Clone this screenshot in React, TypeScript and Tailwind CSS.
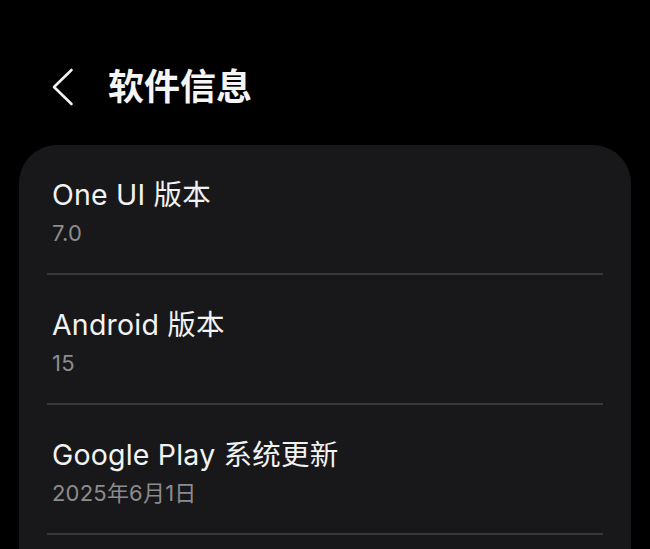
import React from 'react';

const rows = [
  { title: 'One UI 版本', value: '7.0' },
  { title: 'Android 版本', value: '15' },
  { title: 'Google Play 系统更新', value: '2025年6月1日' },
];

const font = { fontFamily: 'Inter, "Noto Sans CJK SC", sans-serif' };

export default function App() {
  return (
    <div className="h-[549px] w-[650px] overflow-hidden bg-black" style={font}>
      <header className="flex h-[145px] items-start pl-[50px] pt-[65px]">
        <div className="flex h-[44px] items-center gap-[32px]">
          <svg width="26" height="44" viewBox="0 0 26 44" fill="none">
            <path d="M21.5 5 L4 22 L21.5 39" stroke="#f2f2f2" strokeWidth="2.6" strokeLinecap="round" strokeLinejoin="round" />
          </svg>
          <h1 className="text-[36px] font-bold leading-[44px] text-[#f5f5f5]">软件信息</h1>
        </div>
      </header>

      <section className="mx-[19px] min-h-[420px] rounded-t-[38px] bg-[#18181a]">
        {rows.map((row) => (
          <div key={row.title} className="px-[28px]">
            <div className="px-[5px] pb-[20px] pt-[32px]">
              <div className="text-[28.5px] leading-[36px] tracking-[0.2px] text-[#f2f2f2]">{row.title}</div>
              <div className="text-[22px] leading-[40px] tracking-[0.2px] text-[#8c8c8e]">{row.value}</div>
            </div>
            <div className="h-[2px] bg-[#38383a]" />
          </div>
        ))}
      </section>
    </div>
  );
}
